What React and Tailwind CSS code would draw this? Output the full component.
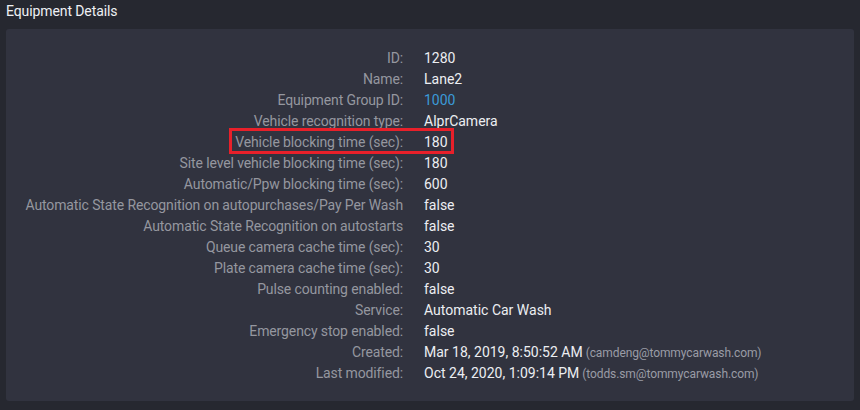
const rows = [
  { label: "ID:", value: "1280" },
  { label: "Name:", value: "Lane2" },
  { label: "Equipment Group ID:", value: "1000", link: true },
  { label: "Vehicle recognition type:", value: "AlprCamera" },
  { label: "Vehicle blocking time (sec):", value: "180", marked: true },
  { label: "Site level vehicle blocking time (sec):", value: "180" },
  { label: "Automatic/Ppw blocking time (sec):", value: "600" },
  { label: "Automatic State Recognition on autopurchases/Pay Per Wash", value: "false" },
  { label: "Automatic State Recognition on autostarts", value: "false" },
  { label: "Queue camera cache time (sec):", value: "30" },
  { label: "Plate camera cache time (sec):", value: "30" },
  { label: "Pulse counting enabled:", value: "false" },
  { label: "Service:", value: "Automatic Car Wash" },
  { label: "Emergency stop enabled:", value: "false" },
  { label: "Created:", value: "Mar 18, 2019, 8:50:52 AM", by: "(camdeng@tommycarwash.com)" },
  { label: "Last modified:", value: "Oct 24, 2020, 1:09:14 PM", by: "(todds.sm@tommycarwash.com)" },
];

export default function App() {
  return (
    <div className="h-[410px] w-[860px] bg-[#262830] font-['Roboto',sans-serif] text-[14px]">
      <h1 className="px-[6px] pt-[1px] text-[14px] leading-[20px] tracking-[-0.1px] text-[#eef0f4]">
        Equipment Details
      </h1>
      <div className="mx-[6px] mt-[8px] h-[372px] rounded-[3px] bg-[#31333f] pt-[19px]">
        {rows.map((row) => (
          <div key={row.label} className="relative flex h-[21px] items-center leading-[21px]">
            <div className="w-[397px] text-right tracking-[-0.12px] text-[#95979f]">{row.label}</div>
            <div className="ml-[21px] text-[#eceef2]">
              <span className={row.link ? "text-[#3b9ad8]" : ""}>{row.value}</span>
              {row.by && (
                <span className="ml-[3px] text-[12px] tracking-[-0.1px] text-[#9a9ca6]">{row.by}</span>
              )}
            </div>
            {row.marked && (
              <div className="absolute left-[223px] top-[-4px] h-[26px] w-[225px] border-[3px] border-solid border-[#e8202a]" />
            )}
          </div>
        ))}
      </div>
    </div>
  );
}
